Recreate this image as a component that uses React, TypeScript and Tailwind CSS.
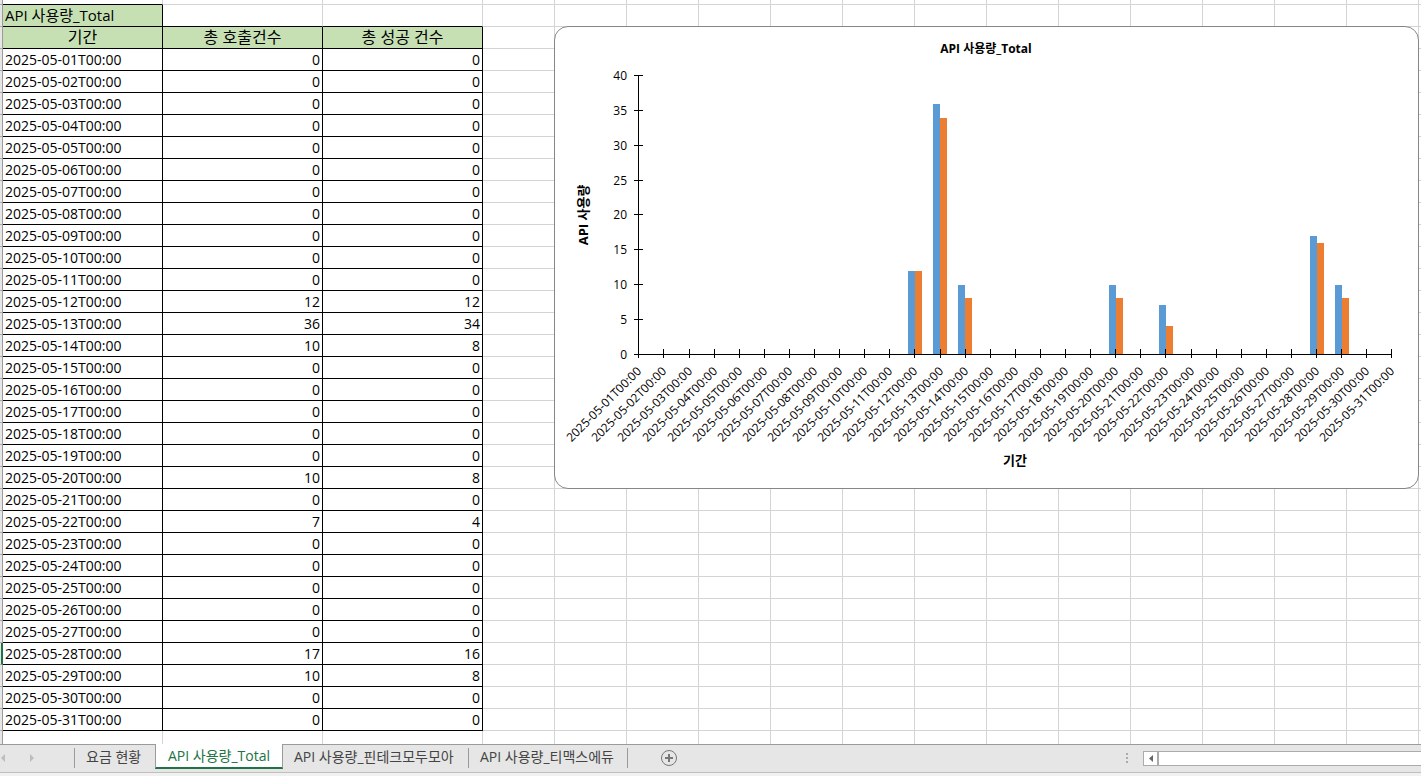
import React, { useState } from 'react';

type Usage = { date: string; calls: number; success: number };

// Days without an entry here had no traffic
const TRAFFIC: Record<number, [number, number]> = {
    12: [12, 12],
    13: [36, 34],
    14: [10, 8],
    20: [10, 8],
    22: [7, 4],
    28: [17, 16],
    29: [10, 8],
};

const USAGE: Usage[] = Array.from({ length: 31 }, (_, i) => {
    const day = i + 1;
    const [calls, success] = TRAFFIC[day] ?? [0, 0];
    return { date: `2025-05-${String(day).padStart(2, '0')}T00:00`, calls, success };
});

const SHEETS = [
    { name: '요금 현황', width: 'min-w-[80px]' },
    { name: 'API 사용량_Total', width: 'min-w-[128px]' },
    { name: 'API 사용량_핀테크모두모아', width: 'min-w-[186px]' },
    { name: 'API 사용량_티맥스에듀', width: 'min-w-[159px]' },
];

// Zero-based, counted from the title row
const ACTIVE_ROW = 29;

function RowHeaders() {
    return (
        <div className="w-[3px] shrink-0 bg-[#e6e6e6] border-r border-[#9b9b9b]">
            <div className="h-[5px] border-b border-[#ababab]" />
            {Array.from({ length: 33 }, (_, i) => (
                <div key={i} className={`h-[22px] border-b border-[#ababab] ${i === ACTIVE_ROW ? '-mr-px border-r-2 border-r-[#217346]' : ''}`} />
            ))}
        </div>
    );
}

function UsageTable() {
    const head = 'h-[22px] p-0 border-r border-b border-black bg-[#c6e0b4] text-base leading-[21px] font-normal text-center';
    const cell = 'h-[22px] px-[2px] py-0 border-r border-b border-black bg-white leading-[21px]';
    return (
        <table className="w-[480px] shrink-0 table-fixed border-separate border-spacing-0 text-sm text-black whitespace-nowrap">
            <tbody>
                <tr>
                    <td className="h-[5px] p-0 bg-white border-b border-b-black border-r border-r-[#d4d4d4]" />
                    <td className="h-[5px] p-0 bg-white border-b border-r border-[#d4d4d4]" />
                    <td className="h-[5px] p-0 bg-white border-b border-r border-[#d4d4d4]" />
                </tr>
                <tr>
                    <td className="h-[22px] px-[2px] py-0 border-r border-b border-black bg-[#c6e0b4] text-[15px] leading-[21px]">API 사용량_Total</td>
                    <td className="p-0 bg-white border-b border-b-black border-r border-r-[#d4d4d4]" />
                    <td className="p-0 bg-white border-b border-b-black border-r border-r-[#d4d4d4]" />
                </tr>
                <tr>
                    <th scope="col" className={head}>기간</th>
                    <th scope="col" className={head}>총 호출건수</th>
                    <th scope="col" className={head}>총 성공 건수</th>
                </tr>
                {USAGE.map(row => (
                    <tr key={row.date}>
                        <td className={cell}>{row.date}</td>
                        <td className={`${cell} text-right`}>{row.calls}</td>
                        <td className={`${cell} text-right`}>{row.success}</td>
                    </tr>
                ))}
                <tr>
                    <td className="h-[13px] p-0 bg-white border-r border-[#d4d4d4]" />
                    <td className="h-[13px] p-0 bg-white border-r border-[#d4d4d4]" />
                    <td className="h-[13px] p-0 bg-white border-r border-[#d4d4d4]" />
                </tr>
            </tbody>
        </table>
    );
}

function UsageChart() {
    const left = 83;
    const bottom = 327;
    const stepX = 25.1;
    const unit = 6.96;
    const tickX = (i: number) => Math.round(left + 0.35 + i * stepX);
    const tickY = (v: number) => Math.floor(bottom - v * unit);
    const barX = (i: number) => Math.round(left + i * stepX) + 1;
    const barY = (v: number) => Math.round(bottom + 0.15 - v * unit);

    return (
        <figure className="flex-1 min-w-0 self-start mt-[26px] ml-[71px] mr-[2px] bg-white border border-[#868686] rounded-[14px] overflow-hidden">
            <svg viewBox="0 0 863 461" className="block w-full" role="img" aria-label="API 사용량_Total">
                <text x="431" y="26" textAnchor="middle" className="text-[12px] font-bold">API 사용량_Total</text>
                <text transform="translate(33 188) rotate(-90)" textAnchor="middle" className="text-[13px] font-bold">API 사용량</text>
                <text x="460" y="438" textAnchor="middle" className="text-[13px] font-bold">기간</text>

                {USAGE.map((row, i) => (
                    <g key={row.date} shapeRendering="crispEdges">
                        {row.calls > 0 && <rect x={barX(i) - 7} y={barY(row.calls)} width="7" height={bottom - barY(row.calls)} fill="#5b9bd5" />}
                        {row.success > 0 && <rect x={barX(i)} y={barY(row.success)} width="7" height={bottom - barY(row.success)} fill="#ed7d31" />}
                    </g>
                ))}

                <g fill="#000" shapeRendering="crispEdges">
                    <rect x={left} y={tickY(40)} width="1" height={bottom - tickY(40)} />
                    <rect x={left} y={bottom} width={30 * stepX + 1} height="1" />
                    {[0, 5, 10, 15, 20, 25, 30, 35, 40].map(v => (
                        <rect key={v} x={left - 4} y={tickY(v)} width="9" height="1" />
                    ))}
                    {USAGE.map((row, i) => (
                        <rect key={row.date} x={tickX(i)} y={bottom - 5} width="1" height="9" />
                    ))}
                </g>

                <g className="text-[12px]">
                    {[0, 5, 10, 15, 20, 25, 30, 35, 40].map(v => (
                        <text key={v} x="72" y={tickY(v) + 5} textAnchor="end">{v}</text>
                    ))}
                    {USAGE.map((row, i) => (
                        <text key={row.date} transform={`translate(${tickX(i) + 4} ${bottom + 18}) rotate(-45)`} textAnchor="end">{row.date}</text>
                    ))}
                </g>
            </svg>
        </figure>
    );
}

export default function App() {
    const [active, setActive] = useState(1);

    return (
        <div className="min-h-screen flex flex-col bg-[#f1f1f1] font-['Open_Sans','Noto_Sans_CJK_KR',sans-serif] overflow-hidden">
            <main className="flex bg-white">
                <RowHeaders />
                <div className="flex flex-1 min-w-0 bg-[linear-gradient(to_right,#d4d4d4_1px,transparent_1px),linear-gradient(to_bottom,#d4d4d4_1px,transparent_1px)] [background-size:72px_22px] [background-position:47px_4px]">
                    <UsageTable />
                    <UsageChart />
                </div>
            </main>

            {/* Sheet tabs + horizontal scroll */}
            <footer className="flex h-[29px] bg-[#e6e6e6] border-t border-t-[#9b9b9b] border-b border-b-[#bfbfbf]">
                <div className="flex w-[75px] shrink-0 h-[23px] items-center">
                    <button aria-label="이전 시트" className="w-[6px] h-4 mt-[3px] flex items-center">
                        <svg width="6" height="8" viewBox="0 0 6 8" fill="#bdbdbd"><path d="M5 0v8L1 4z" /></svg>
                    </button>
                    <button aria-label="다음 시트" className="w-[6px] h-4 mt-[3px] ml-[23px] flex items-center">
                        <svg width="6" height="8" viewBox="0 0 6 8" fill="#bdbdbd"><path d="M1 0v8l4-4z" /></svg>
                    </button>
                    <span className="ml-auto mt-[3px] w-px h-5 bg-[#9b9b9b]" />
                </div>
                <nav className="flex shrink-0">
                    {SHEETS.map((sheet, i) => (
                        <button key={sheet.name} onClick={() => setActive(i)}
                            className={`${sheet.width} flex items-center text-sm leading-5 whitespace-nowrap ${i === active ? '-mt-px h-[25px] justify-center bg-white border-x border-[#9b9b9b] border-b-2 border-b-[#217346] text-[#217346]' : 'h-[23px] justify-between pl-[11px] text-[#444]'}`}
                        >
                            {sheet.name}
                            {i > active && <span className="mt-[3px] w-px h-5 bg-[#9b9b9b]" />}
                        </button>
                    ))}
                </nav>
                <button aria-label="새 시트" className="ml-8 mt-1 w-[18px] h-[18px] shrink-0">
                    <svg width="18" height="18" viewBox="0 0 18 18" fill="none" stroke="#777">
                        <circle cx="9" cy="9" r="7.5" />
                        <path d="M9 5v8M5 9h8" strokeWidth="2" />
                    </svg>
                </button>
                <div className="ml-auto mr-[15px] mt-[8px] flex flex-col gap-[2px]">
                    <span className="w-[2px] h-[2px] bg-[#ababab]" />
                    <span className="w-[2px] h-[2px] bg-[#ababab]" />
                    <span className="w-[2px] h-[2px] bg-[#ababab]" />
                </div>
                <div className="flex w-[278px] h-[15px] mt-[6px] shrink-0 bg-white border border-r-0 border-[#ababab]">
                    <button aria-label="왼쪽으로 스크롤" className="w-[15px] flex items-center justify-center border-r-2 border-[#ababab]">
                        <svg width="4" height="7" viewBox="0 0 4 7" fill="#666"><path d="M4 0v7L0 3.500z" /></svg>
                    </button>
                </div>
            </footer>
        </div>
    );
}
